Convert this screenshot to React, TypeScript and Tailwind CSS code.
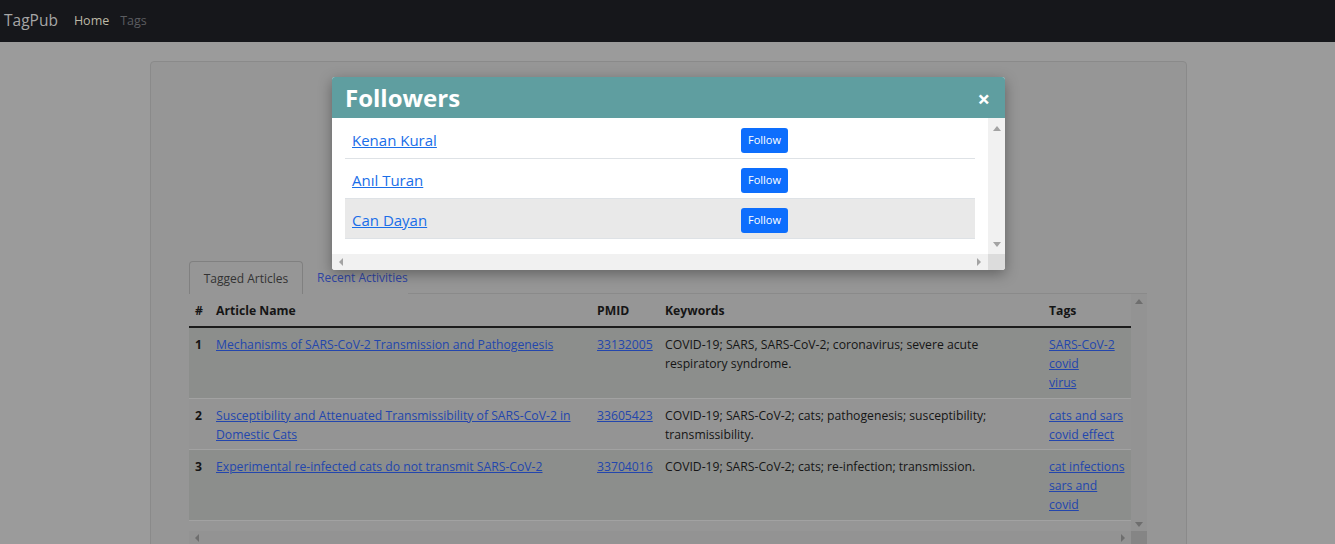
import React from 'react';

type Article = {
  id: number;
  name: string[];
  pmid: string;
  keywords: string[];
  tags: string[];
};

const articles: Article[] = [
  {
    id: 1,
    name: ['Mechanisms of SARS-CoV-2 Transmission and Pathogenesis'],
    pmid: '33132005',
    keywords: ['COVID-19; SARS, SARS-CoV-2; coronavirus; severe acute', 'respiratory syndrome.'],
    tags: ['SARS-CoV-2', 'covid', 'virus'],
  },
  {
    id: 2,
    name: ['Susceptibility and Attenuated Transmissibility of SARS-CoV-2 in', 'Domestic Cats'],
    pmid: '33605423',
    keywords: ['COVID-19; SARS-CoV-2; cats; pathogenesis; susceptibility;', 'transmissibility.'],
    tags: ['cats and sars', 'covid effect'],
  },
  {
    id: 3,
    name: ['Experimental re-infected cats do not transmit SARS-CoV-2'],
    pmid: '33704016',
    keywords: ['COVID-19; SARS-CoV-2; cats; re-infection; transmission.'],
    tags: ['cat infections', 'sars and', 'covid'],
  },
];

const followers = ['Kenan Kural', 'Anıl Turan', 'Can Dayan'];

function Arrow({ dir, color }: { dir: 'up' | 'down' | 'left' | 'right'; color: string }) {
  const points = {
    up: '0,7 4,2 8,7',
    down: '0,2 8,2 4,7',
    left: '6,0 6,8 2,4',
    right: '2,0 2,8 6,4',
  }[dir];
  return (
    <svg width="8" height="8" viewBox="0 0 8 8">
      <polygon points={points} fill={color} />
    </svg>
  );
}

export default function App() {
  return (
    <div className="relative h-[544px] overflow-hidden bg-[#9b9b9b] font-['Open_Sans',sans-serif]">
      {/* Navbar */}
      <nav className="flex h-[42px] items-center bg-[#16171b] pl-[4px]">
        <span className="text-[15.5px] text-[#a6a6a6]">TagPub</span>
        <span className="ml-[16px] text-[12.5px] text-[#bdb9a6]">Home</span>
        <span className="ml-[11px] text-[12.5px] text-[#5b5c60]">Tags</span>
      </nav>

      {/* Card */}
      <div className="ml-[150px] mt-[19px] w-[1037px] rounded-[4px] border border-[#8a8a8a] bg-[#969696] pl-[38px] pr-[39px]">
        <div className="h-[199px]" />

        {/* Tabs */}
        <div className="flex h-[33px] items-end">
          <div className="flex h-[33px] w-[114px] items-center justify-center rounded-t-[4px] border border-b-0 border-[#808080] pt-[1px] text-[12px] text-[#333]">
            Tagged Articles
          </div>
          <div className="flex h-[33px] items-center pl-[14px] pt-[1px] text-[12px] text-[#2f45a4]">
            Recent Activities
          </div>
          <div className="flex-1 border-b border-[#8a8a8a]" />
        </div>

        {/* Table with scrollbars */}
        <div className="flex">
          <div className="w-[942px]">
            <table className="w-full table-fixed border-collapse text-[12.2px] leading-[19.2px] text-[#151515]">
              <colgroup>
                <col className="w-[21px]" />
                <col className="w-[381px]" />
                <col className="w-[68px]" />
                <col className="w-[384px]" />
                <col />
              </colgroup>
              <thead>
                <tr className="h-[33px] border-b-2 border-[#1b1b1b] text-left">
                  <th className="px-[6px] pt-[1px] font-bold">#</th>
                  <th className="px-[6px] pt-[1px] font-bold">Article Name</th>
                  <th className="px-[6px] pt-[1px] font-bold">PMID</th>
                  <th className="px-[6px] pt-[1px] font-bold">Keywords</th>
                  <th className="px-[6px] pt-[1px] font-bold">Tags</th>
                </tr>
              </thead>
              <tbody>
                {articles.map((a) => (
                  <tr
                    key={a.id}
                    className={`border-b border-[#a2a2a2] align-top ${
                      a.id % 2 === 1 ? 'bg-[#8c8e8c]' : 'bg-[#949494]'
                    }`}
                  >
                    <td className="px-[6px] pb-[5px] pt-[7px] font-bold">{a.id}</td>
                    <td className="px-[6px] pb-[5px] pt-[7px]">
                      {a.name.map((l, i) => (
                        <div key={i} className="whitespace-nowrap">
                          <span className="text-[#2346ad] underline">{l}</span>
                        </div>
                      ))}
                    </td>
                    <td className="px-[6px] pb-[5px] pt-[7px]">
                      <span className="text-[#2346ad] underline">{a.pmid}</span>
                    </td>
                    <td className="px-[6px] pb-[5px] pt-[7px]">
                      {a.keywords.map((l, i) => (
                        <div key={i} className="whitespace-nowrap">
                          {l}
                        </div>
                      ))}
                    </td>
                    <td className="px-[6px] pb-[5px] pt-[7px]">
                      {a.tags.map((t, i) => (
                        <div key={i} className="whitespace-nowrap">
                          <span className="text-[#2346ad] underline">{t}</span>
                        </div>
                      ))}
                    </td>
                  </tr>
                ))}
              </tbody>
            </table>
            <div className="h-[10px]" />
          </div>
          <div className="flex w-[16px] flex-col items-center justify-between bg-[#939393] py-[3px]">
            <Arrow dir="up" color="#6e6e6e" />
            <Arrow dir="down" color="#6e6e6e" />
          </div>
        </div>
        <div className="flex h-[14px]">
          <div className="flex w-[942px] items-center justify-between bg-[#939393] px-[4px]">
            <Arrow dir="left" color="#6e6e6e" />
            <Arrow dir="right" color="#6e6e6e" />
          </div>
          <div className="w-[16px] bg-[#858585]" />
        </div>
        <div className="h-[40px]" />
      </div>

      {/* Modal */}
      <div className="absolute left-[332px] top-[77px] w-[673px] overflow-hidden rounded-[3px] bg-white shadow-[0_4px_14px_rgba(0,0,0,0.35)]">
        <div className="flex h-[41px] items-center justify-between bg-[#5f9ea0] pl-[13px] pr-[15px]">
          <span className="text-[24px] font-bold text-white">Followers</span>
          <span className="text-[22px] font-bold leading-none text-white">×</span>
        </div>
        <div className="flex">
          <div className="w-[656px]">
            <div className="h-[136px] pl-[13px] pr-[13px]">
              {followers.map((f, i) => (
                <div
                  key={f}
                  className={`flex items-center border-b border-[#dee2e6] ${
                    i === 0 ? 'h-[41px] pt-[4px]' : 'h-[40px] pt-[3px]'
                  } ${i === 2 ? 'bg-[#e9e9e9]' : ''}`}
                >
                  <div className="w-[396px] pl-[7px] text-[15px] text-[#1a6ee8] underline">{f}</div>
                  <button className="h-[25px] w-[47px] rounded-[3px] bg-[#0d6efd] text-[11px] text-white">
                    Follow
                  </button>
                </div>
              ))}
            </div>
            <div className="flex h-[16px] items-center justify-between bg-[#f1f1f1] px-[5px]">
              <Arrow dir="left" color="#a3a3a3" />
              <Arrow dir="right" color="#a3a3a3" />
            </div>
          </div>
          <div className="flex w-[17px] flex-col">
            <div className="flex h-[136px] flex-col items-center justify-between bg-[#f1f1f1] py-[6px]">
              <Arrow dir="up" color="#a3a3a3" />
              <Arrow dir="down" color="#a3a3a3" />
            </div>
            <div className="h-[16px] bg-[#dcdcdc]" />
          </div>
        </div>
      </div>
    </div>
  );
}
